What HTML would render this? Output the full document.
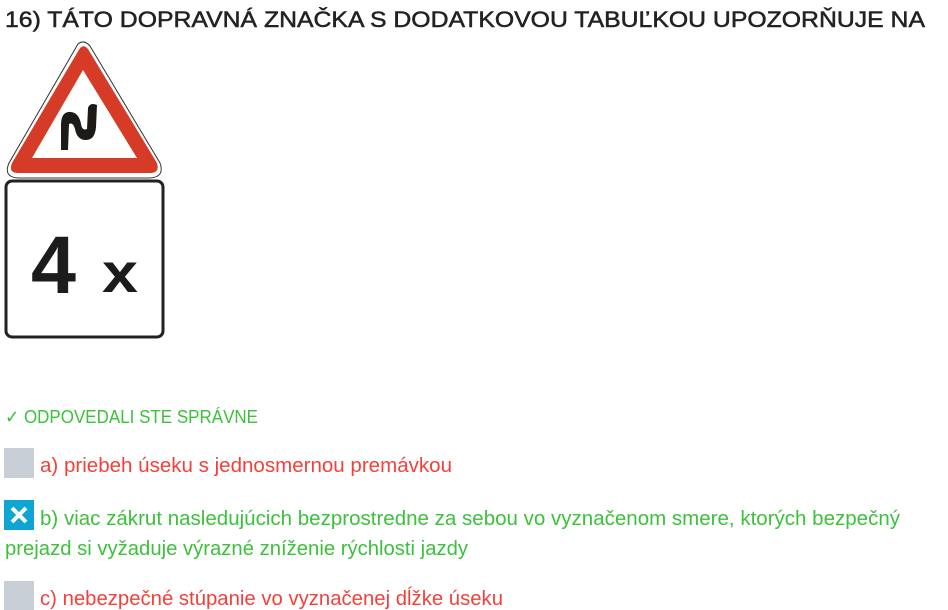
<!DOCTYPE html>
<html><head><meta charset="utf-8"><style>
html,body{margin:0;padding:0;background:#fff;width:948px;height:610px;overflow:hidden}
svg{position:absolute;left:0;top:0}
text{font-family:"Liberation Sans",sans-serif}
</style></head><body>
<svg width="948" height="610" viewBox="0 0 948 610">
<text x="5" y="27" font-size="22" fill="#222" stroke="#222" stroke-width="0.5" textLength="920" lengthAdjust="spacingAndGlyphs">16) TÁTO DOPRAVNÁ ZNAČKA S DODATKOVOU TABUĽKOU UPOZORŇUJE NA</text>
<!-- triangle -->
<path d="M78 44 Q84 39 90 46 L160 163 Q165 177 150 178 L18 178 Q3 177 9 163 Z" fill="#fff" stroke="#333" stroke-width="1"/>
<path d="M80 48 Q84 44 88 49 L157 163 Q160 173 150 173 L18 173 Q8 173 12 163 Z" fill="#d63b28"/>
<path d="M83 70 L137 158 L32 158 Z" fill="#fff"/>
<path d="M61 150 L61 125 Q61 111 71 112 Q79 113 81 124 Q82 131 87 129 L88 108 Q90 102 97 105 L96 127 Q95 140 86 140 Q77 140 75 129 Q73 122 69 124 L68 150 Z" fill="#1e1a17"/>
<!-- plate -->
<rect x="6" y="181" width="157" height="156" rx="6" fill="#fff" stroke="#222" stroke-width="3"/>
<text x="31" y="293" font-size="82" font-weight="bold" fill="#1c1c1c" textLength="45" lengthAdjust="spacingAndGlyphs">4</text>
<text x="102" y="292" font-size="56" font-weight="bold" fill="#1c1c1c" textLength="36" lengthAdjust="spacingAndGlyphs">x</text>
<!-- answers -->
<text x="5" y="423" font-size="18" fill="#3cc13b" textLength="253" lengthAdjust="spacingAndGlyphs">✓ ODPOVEDALI STE SPRÁVNE</text>
<rect x="4" y="448" width="30" height="30" fill="#c8ced6"/>
<text x="40" y="472" font-size="20" fill="#f5403a" textLength="412" lengthAdjust="spacingAndGlyphs">a) priebeh úseku s jednosmernou premávkou</text>
<rect x="4" y="500" width="30" height="30" fill="#0ea5d5"/>
<path d="M12 508 L26 522 M26 508 L12 522" stroke="#fff" stroke-width="4"/>
<text x="40" y="525" font-size="20" fill="#3cc13b" textLength="860" lengthAdjust="spacingAndGlyphs">b) viac zákrut nasledujúcich bezprostredne za sebou vo vyznačenom smere, ktorých bezpečný</text>
<text x="5" y="555" font-size="20" fill="#3cc13b" textLength="463" lengthAdjust="spacingAndGlyphs">prejazd si vyžaduje výrazné zníženie rýchlosti jazdy</text>
<rect x="4" y="581" width="30" height="30" fill="#c8ced6"/>
<text x="40" y="605" font-size="20" fill="#f5403a" textLength="463" lengthAdjust="spacingAndGlyphs">c) nebezpečné stúpanie vo vyznačenej dĺžke úseku</text>
</svg>
</body></html>
